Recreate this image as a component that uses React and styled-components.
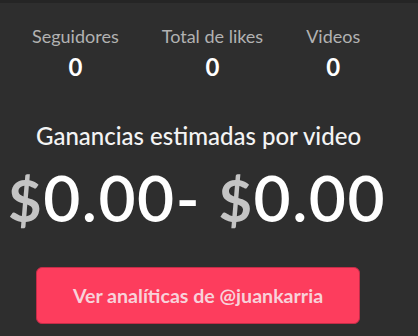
import styled, { createGlobalStyle } from "styled-components";

const GlobalStyle = createGlobalStyle`
    html, body {
        margin: 0;
        padding: 0;
        background: #2e2e2e;
    }
    body {
        font-family: Lato, "Noto Sans", sans-serif;
    }
`;

const Page = styled.div`
    width: 418px;
    height: 336px;
    box-sizing: border-box;
    border-top: 3px solid #252525;
    background: #2e2e2e;
    display: flex;
    flex-direction: column;
    overflow: hidden;
`;

const Stats = styled.div`
    display: flex;
    gap: 43px;
    padding: 23px 0 0 32px;
`;

const Stat = styled.div`
    display: flex;
    flex-direction: column;
    align-items: center;
    gap: 6px;
`;

const Label = styled.div`
    font-size: 18px;
    color: #b2b2b2;
    line-height: 20px;
`;

const Value = styled.div`
    font-size: 24px;
    font-weight: 700;
    color: #ffffff;
    line-height: 30px;
`;

const Heading = styled.div`
    margin-top: 39px;
    padding-left: 36px;
    font-size: 24px;
    font-weight: 500;
    color: #f4f4f4;
    line-height: 30px;
`;

const Range = styled.div`
    margin-top: 12px;
    padding-left: 8px;
    font-size: 64px;
    font-weight: 600;
    letter-spacing: 1.5px;
    color: #ffffff;
    line-height: 70px;
    white-space: nowrap;
`;

const Currency = styled.span`
    font-size: 58px;
    color: #c4c4c4;
    font-weight: 700;
`;

const Button = styled.button`
    margin: 32px 0 0 36px;
    width: 324px;
    height: 57px;
    border: 1px solid #c42c48;
    border-radius: 6px;
    background: #fd3d5d;
    color: #f8d2da;
    font-family: Lato, "Noto Sans", sans-serif;
    font-size: 19.6px;
    font-weight: 700;
    cursor: pointer;
`;

function StatItem({ label, value }) {
    return (
        <Stat>
            <Label>{label}</Label>
            <Value>{value}</Value>
        </Stat>
    );
}

export default function App() {
    return (
        <Page>
            <GlobalStyle />
            <Stats>
                <StatItem label="Seguidores" value="0" />
                <StatItem label="Total de likes" value="0" />
                <StatItem label="Videos" value="0" />
            </Stats>
            <Heading>Ganancias estimadas por video</Heading>
            <Range>
                <Currency>$</Currency>0.00- <Currency>$</Currency>0.00
            </Range>
            <Button>Ver analíticas de @juankarria</Button>
        </Page>
    );
}
